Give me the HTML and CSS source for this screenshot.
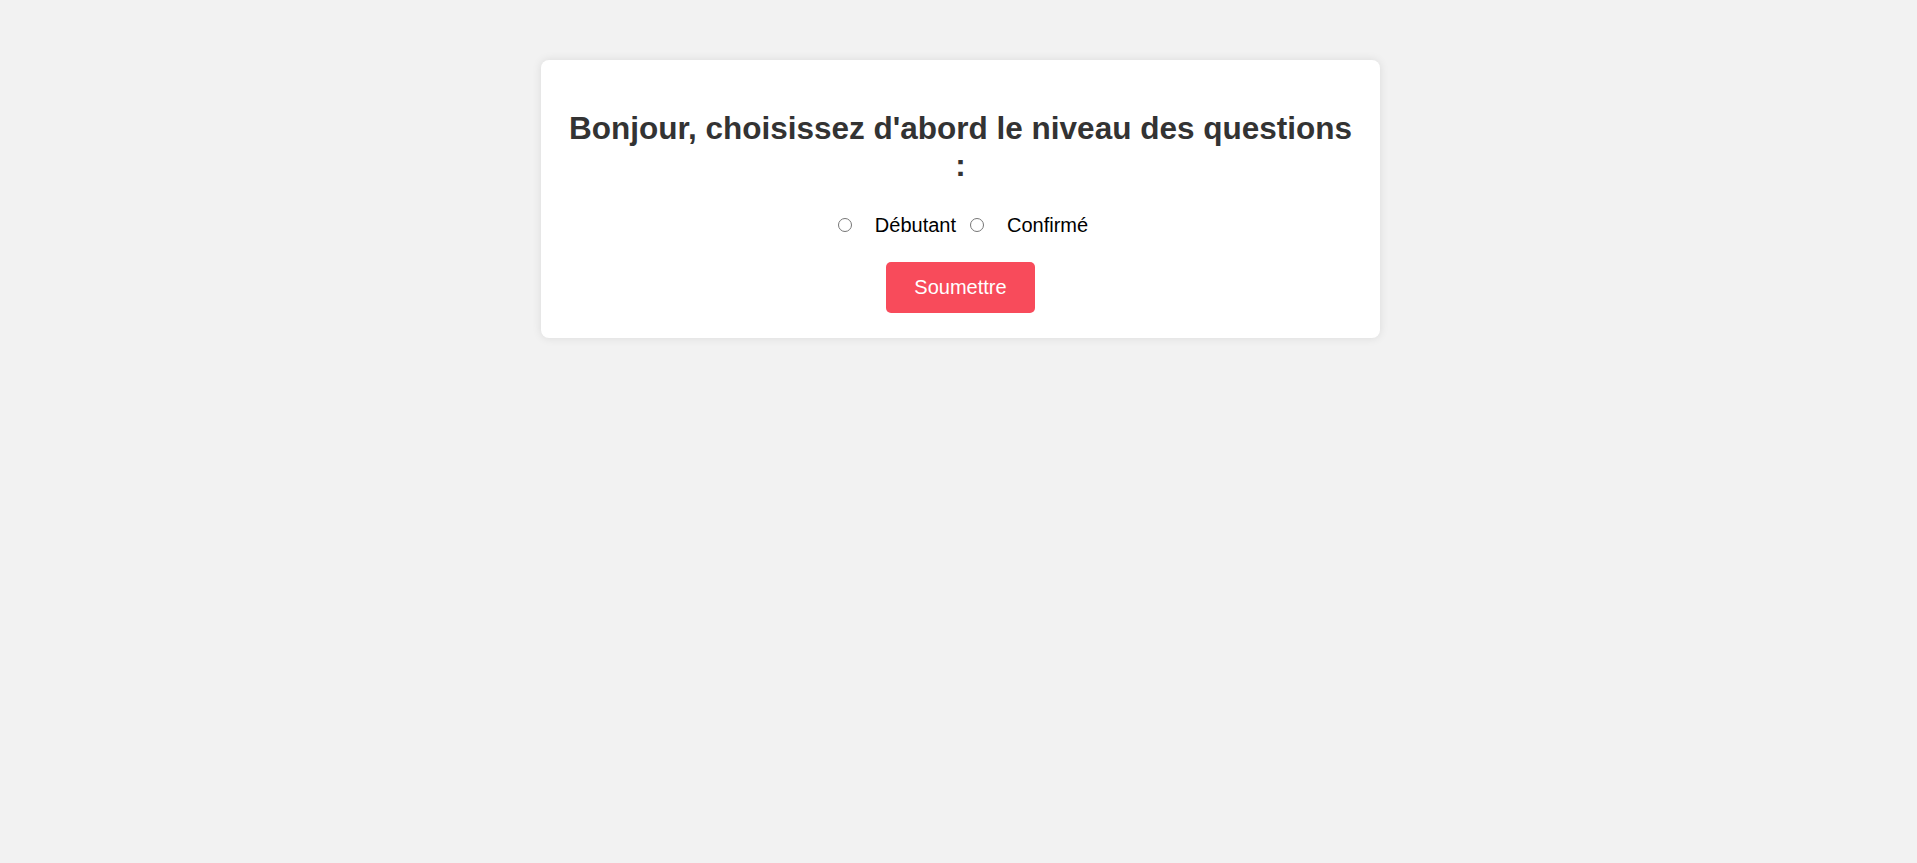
FILE: index.html
```html
<!DOCTYPE html>
<html lang="fr">
<head>
    <meta charset="UTF-8">
    <meta name="viewport" content="width=device-width, initial-scale=1.0">
    <title>Quiz</title>
    <link rel="stylesheet" href="styles.css">
</head>
<body>
    <div class="container">
        <h1>Bonjour, choisissez d'abord le niveau des questions :</h1>
        <form id="level-form">
            <div class="level-options">
                <div class="option">
                    <input type="radio" id="debutant" name="level" value="debutant">
                    <label for="debutant">Débutant</label>
                </div>
                <div class="option">
                    <input type="radio" id="confirme" name="level" value="confirme">
                    <label for="confirme">Confirmé</label>
                </div>
            </div>
            <button type="submit">Soumettre</button>
        </form>
    </div>
</body>
</html>
```

FILE: styles.css
```css
body {
    font-family: Arial, 'Liberation Sans', sans-serif;
    background-color: #f2f2f2;
    margin: 0;
    padding: 60px 0 60px 4px;
}

.container {
    background-color: white;
    width: 799px;
    margin: 0 auto;
    padding: 50px 20px 25px;
    border-radius: 8px;
    box-shadow: 0 0 10px rgba(0, 0, 0, 0.1);
    text-align: center;
}

h1 {
    color: #333;
    font-size: 31.5px;
    line-height: 37px;
    margin: 0 0 30px;
}

form {
    display: flex;
    flex-direction: column;
    align-items: center;
}

.level-options {
    display: flex;
    justify-content: center;
    gap: 9px;
    font-size: 20px;
}

.option {
    display: flex;
    align-items: center;
}

.option input {
    width: 14px;
    height: 14px;
    margin: 0 3px 2px 5px;
}

.option label {
    margin-left: 20px;
}

button {
    margin-top: 25px;
    padding: 14px 28px;
    font-family: Arial, 'Liberation Sans', sans-serif;
    font-size: 20px;
    background-color: #f84b5b;
    color: white;
    border: none;
    border-radius: 5px;
    cursor: pointer;
}
```
